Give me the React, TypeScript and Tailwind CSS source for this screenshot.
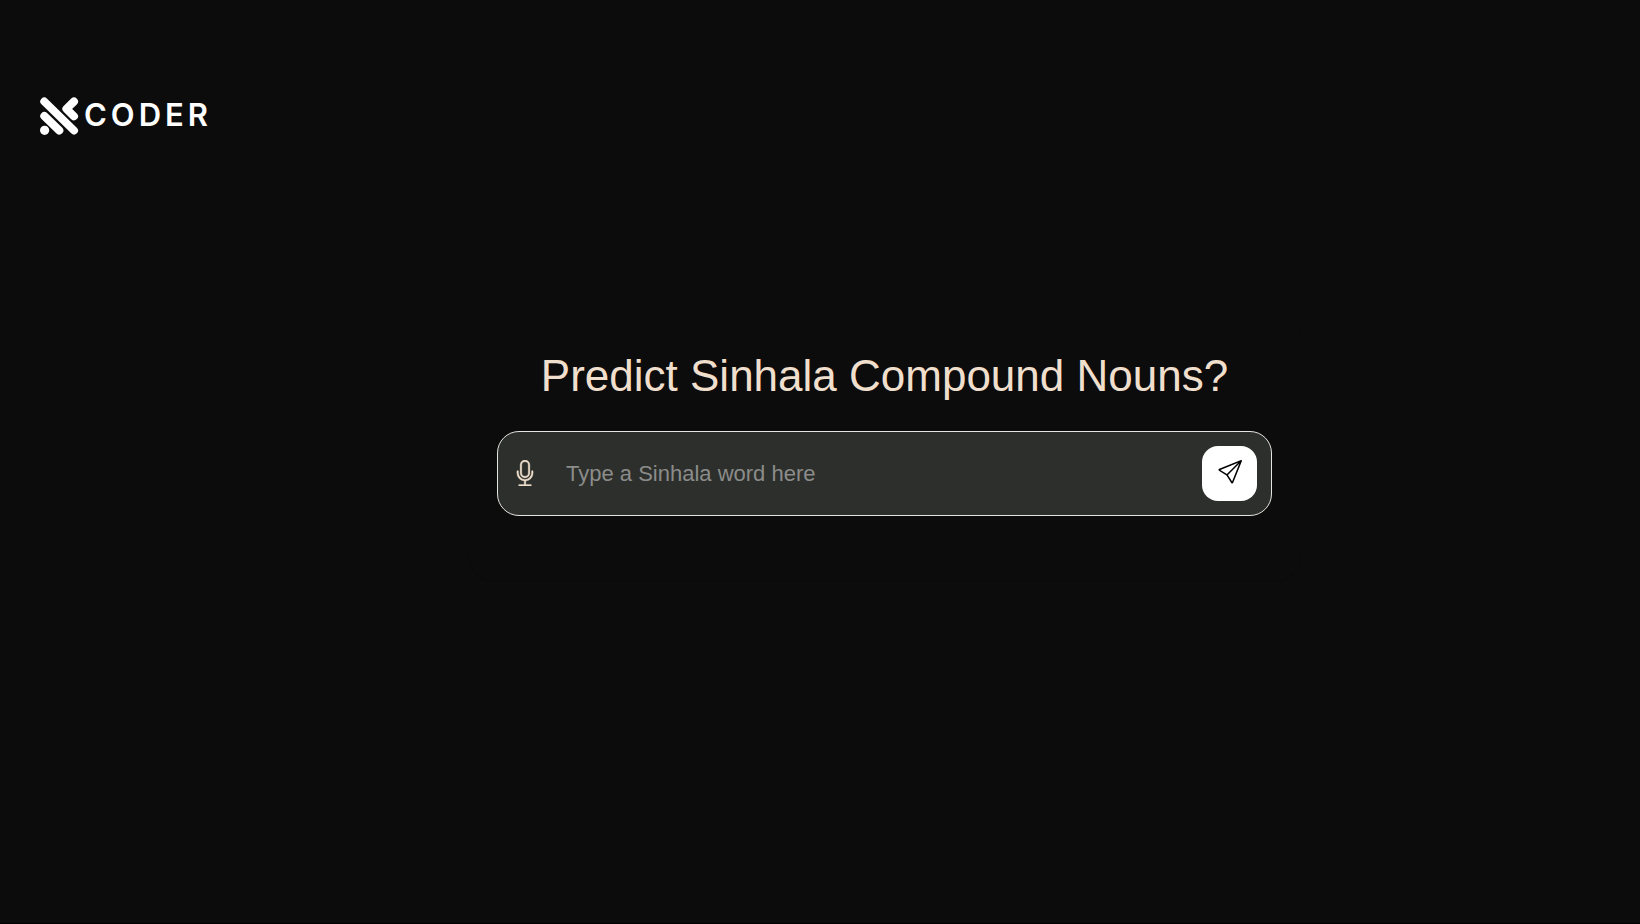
import { BsMic, BsSend } from "react-icons/bs";

function Logo() {
  return (
    <a href="/" aria-label="Coder home" className="flex items-start gap-[5px] text-white">
      <svg viewBox="0 0 40 40" className="size-10" fill="none" stroke="currentColor" strokeWidth="8" strokeLinecap="round" strokeLinejoin="round" aria-hidden="true">
        <path d="M5.3 5.5 35 34.5M5.3 20 20.3 34.5" />
        <path d="M35 5.5 27.4 12.8 35 20.3" />
        <circle cx="5.6" cy="34.3" r="4.6" fill="currentColor" stroke="none" />
      </svg>
      <span className="font-['Inter',sans-serif] text-[31px] leading-[38px] font-semibold tracking-[4px]">CODER</span>
    </a>
  );
}

function PromptBar() {
  return (
    <form
      onSubmit={(event) => event.preventDefault()}
      className="flex w-full items-center rounded-[22px] border border-[#e4e4e0] bg-[#2d2f2c] p-3.5"
    >
      <button type="button" aria-label="Speak a word" className="pb-0.5 text-[#f0dfcc]">
        <BsMic className="size-[26px]" strokeWidth="0.2" />
      </button>
      <input
        type="text"
        aria-label="Sinhala word"
        placeholder="Type a Sinhala word here"
        className="ml-7 min-w-0 flex-1 bg-transparent text-[22px] leading-8 text-[#f0dfcc] outline-none placeholder:text-[#8b8c8a]"
      />
      <button type="submit" aria-label="Predict" className="flex size-[55px] items-center justify-center rounded-2xl bg-white pb-1 text-black">
        <BsSend className="size-6" />
      </button>
    </form>
  );
}

export default function App() {
  return (
    <div className="min-h-screen border-b border-black bg-[#0c0c0c] font-['Liberation_Sans',Arial,sans-serif]">
      <header className="flex px-[39px] pt-24">
        <Logo />
      </header>
      <main className="mt-44 pl-[129px]">
        <section className="mx-auto flex max-w-[831px] flex-col items-center rounded-3xl px-7 pt-8 pb-16 shadow-[0_1px_1px_#0b0b0b]">
          <h1 className="text-center text-[44px] leading-[64px] text-[#f0dfcc]">Predict Sinhala Compound Nouns?</h1>
          <div className="mt-[23px] w-full">
            <PromptBar />
          </div>
        </section>
      </main>
    </div>
  );
}
